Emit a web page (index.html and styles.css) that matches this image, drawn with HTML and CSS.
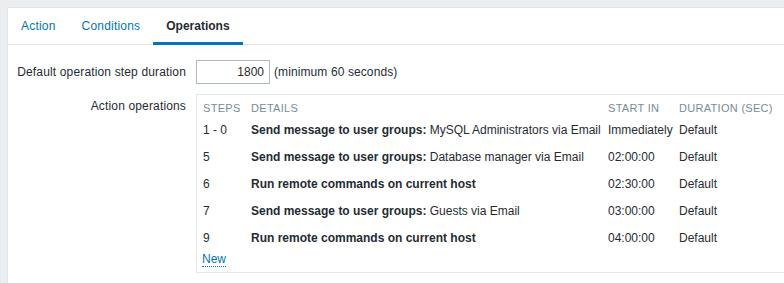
FILE: index.html
```html
<!DOCTYPE html>
<html>
<head>
<meta charset="utf-8">
<link rel="stylesheet" href="styles.css">
</head>
<body>
<div class="panel">
  <ul class="tabs">
    <li><a class="tab" href="#">Action</a></li>
    <li><a class="tab" href="#">Conditions</a></li>
    <li><a class="tab active" href="#">Operations</a></li>
  </ul>
  <div class="form">
    <div class="form-row">
      <div class="label label-mid">Default operation step duration</div>
      <div class="field field-inline">
        <input class="num-input" type="text" value="1800">
        <span class="hint">(minimum 60 seconds)</span>
      </div>
    </div>
    <div class="form-row">
      <div class="label label-top">Action operations</div>
      <div class="field">
        <div class="ops-box">
          <table class="ops">
            <colgroup>
              <col class="c-steps"><col class="c-details"><col class="c-start"><col>
            </colgroup>
            <thead>
              <tr><th>Steps</th><th>Details</th><th>Start in</th><th>Duration (sec)</th></tr>
            </thead>
            <tbody>
              <tr><td>1 - 0</td><td><b>Send message to user groups:</b> MySQL Administrators via Email</td><td>Immediately</td><td>Default</td></tr>
              <tr><td>5</td><td><b>Send message to user groups:</b> Database manager via Email</td><td>02:00:00</td><td>Default</td></tr>
              <tr><td>6</td><td><b>Run remote commands on current host</b></td><td>02:30:00</td><td>Default</td></tr>
              <tr><td>7</td><td><b>Send message to user groups:</b> Guests via Email</td><td>03:00:00</td><td>Default</td></tr>
              <tr><td>9</td><td><b>Run remote commands on current host</b></td><td>04:00:00</td><td>Default</td></tr>
            </tbody>
            <tfoot>
              <tr><td colspan="4"><a class="link-new" href="#">New</a></td></tr>
            </tfoot>
          </table>
        </div>
      </div>
    </div>
  </div>
</div>
</body>
</html>
```

FILE: styles.css
```css
html, body {
  margin: 0;
  padding: 0;
  overflow: hidden;
}
body {
  background: #ebeef0;
  font-family: "Liberation Sans", Arial, sans-serif;
  font-size: 12px;
  line-height: 14px;
  color: #1f2c33;
}
.panel {
  margin: 7px 0 0 7px;
  width: 1000px;
  height: 400px;
  background: #ffffff;
  border: 1px solid #dfe4e7;
}
.tabs {
  list-style: none;
  margin: 0;
  padding: 0;
  display: flex;
  border-bottom: 1px solid #dfe4e7;
}
.tabs li {
  margin-bottom: -1px;
}
.tab {
  display: block;
  padding: 11px 13px 9px;
  border-bottom: 3px solid transparent;
  color: #0275b8;
  text-decoration: none;
  letter-spacing: 0.2px;
}
.tab.active {
  color: #1f2c33;
  font-weight: bold;
  letter-spacing: 0;
  border-bottom-color: #0275b8;
}
.form {
  padding-top: 15px;
  display: flex;
  flex-direction: column;
  gap: 10px;
}
.form-row {
  display: flex;
}
.label {
  width: 178px;
  text-align: right;
  box-sizing: border-box;
  flex: none;
  letter-spacing: 0.15px;
}
.label-mid {
  align-self: center;
}
.label-top {
  padding-top: 5px;
}
.field {
  margin-left: 10px;
  flex: 1;
}
.field-inline {
  display: flex;
  align-items: center;
  gap: 4px;
}
.hint {
  letter-spacing: 0.1px;
}
.num-input {
  width: 74px;
  height: 24px;
  box-sizing: border-box;
  border: 1px solid #acbbc2;
  padding: 0 5px;
  margin: 0;
  text-align: right;
  font-family: "Liberation Sans", Arial, sans-serif;
  font-size: 12px;
  color: #1f2c33;
  background: #fff;
}
.ops-box {
  border: 1px solid #e4e8eb;
  padding: 0 1px;
}
.ops {
  border-collapse: collapse;
  table-layout: fixed;
  width: 100%;
}
.c-steps { width: 48px; }
.c-details { width: 357px; }
.c-start { width: 71px; }
.ops th {
  text-align: left;
  font-weight: normal;
  font-size: 11px;
  letter-spacing: 0.3px;
  text-transform: uppercase;
  color: #768d99;
  padding: 6px 5px 2px;
  white-space: nowrap;
}
.ops td {
  padding: 6px 5px;
  border-bottom: 1px solid transparent;
  white-space: nowrap;
  vertical-align: top;
}
.ops tfoot td {
  padding: 0 4px 6px;
  border: 0;
}
.link-new {
  color: #0275b8;
  text-decoration: none;
  border-bottom: 1px dotted #0275b8;
}
```
